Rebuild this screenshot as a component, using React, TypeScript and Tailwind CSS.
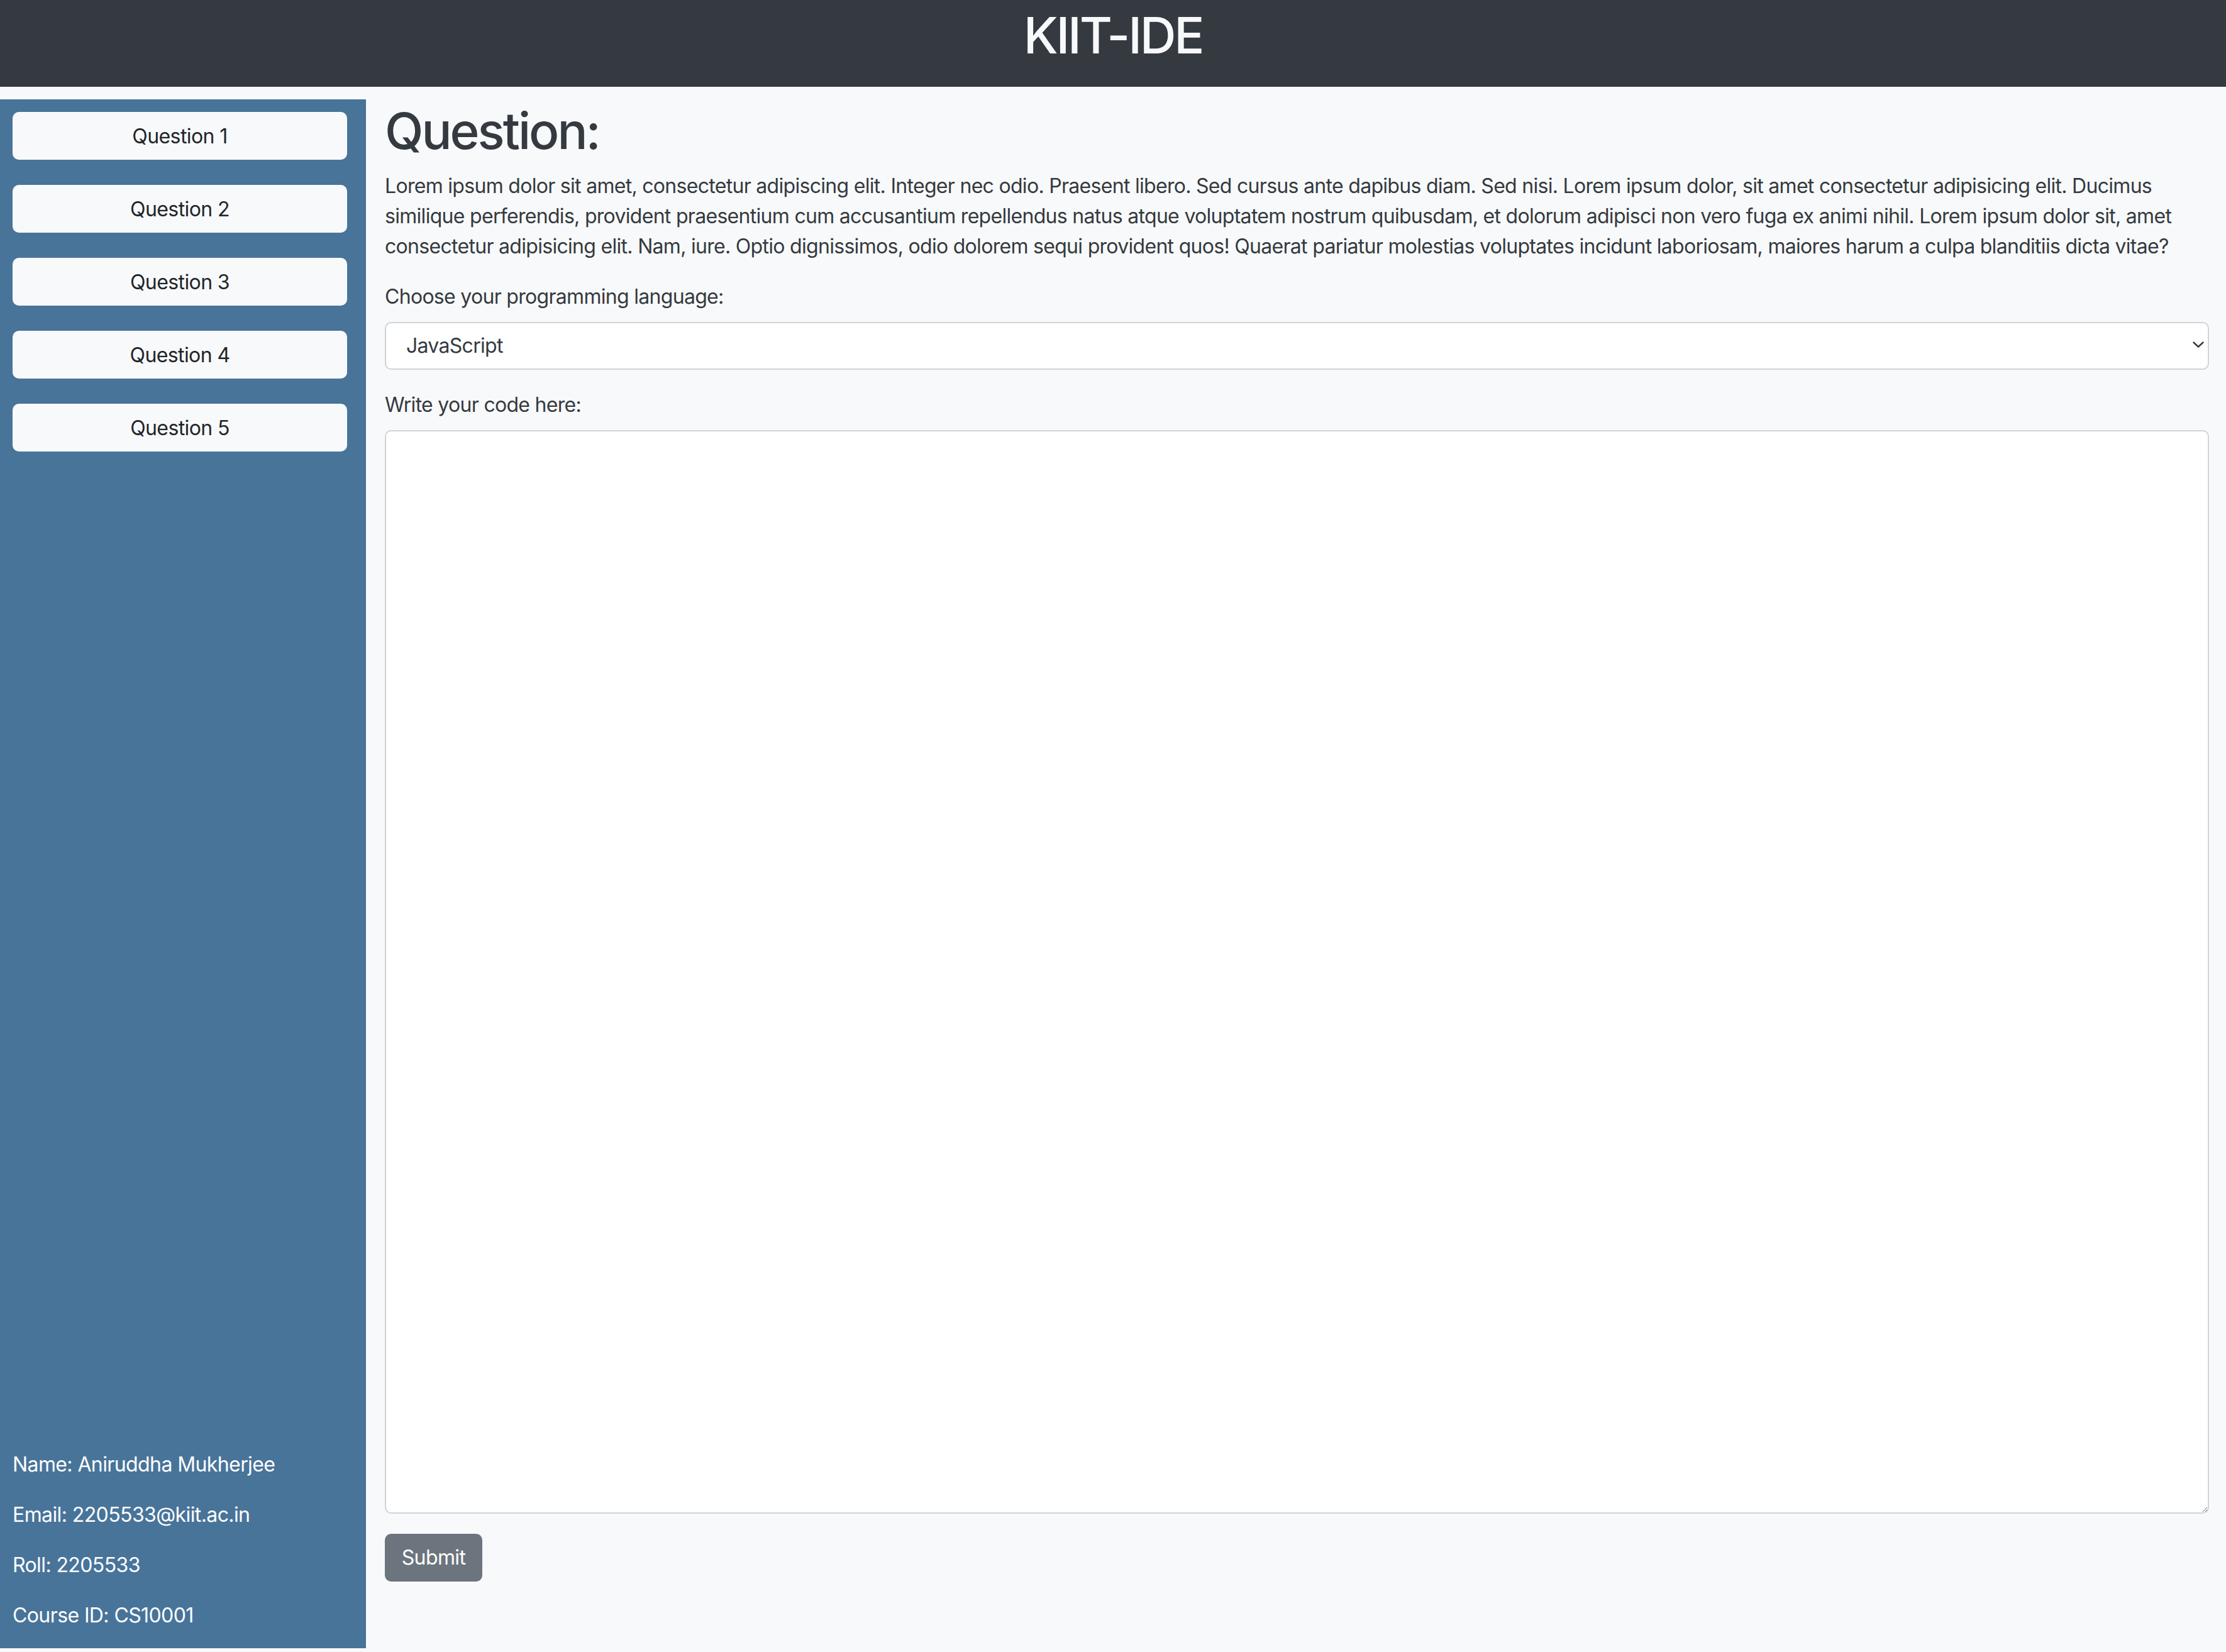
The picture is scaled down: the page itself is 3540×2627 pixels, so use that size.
import React from "react";

const questions = ["Question 1", "Question 2", "Question 3", "Question 4", "Question 5"];

export default function App() {
  return (
    <div className="w-[3540px] h-[2627px] bg-[#f8f9fa] flex flex-col font-['Inter','Noto_Sans',sans-serif] text-[#343a40] overflow-hidden">
      <header className="h-[138px] shrink-0 bg-[#343a40] flex justify-center">
        <h1 className="mt-[8px] text-[80px] leading-[96px] font-medium tracking-[-3.2px] text-[#f8f9fa]">KIIT-IDE</h1>
      </header>
      <div className="flex flex-1 pt-[20px] pb-[6px] min-h-0">
        <aside className="w-[582px] shrink-0 bg-[#48749a] pl-[20px] pr-[30px] py-[20px] flex flex-col justify-between">
          <div className="flex flex-col gap-[40px]">
            {questions.map((q) => (
              <button
                key={q}
                className="h-[76px] w-full rounded-[10px] bg-[#f8f9fa] pt-[2px] text-[32px] leading-[48px] text-[#212529] tracking-[-0.6px]"
              >
                {q}
              </button>
            ))}
          </div>
          <div className="flex flex-col gap-[32px] pb-[8px] text-white text-[32px] leading-[48px] tracking-[-0.6px]">
            <p>Name: Aniruddha Mukherjee</p>
            <p>Email: 2205533@kiit.ac.in</p>
            <p>Roll: 2205533</p>
            <p>Course ID: CS10001</p>
          </div>
        </aside>
        <main className="flex-1 pl-[30px] pr-[27px] pt-[2px] flex flex-col">
          <h1 className="text-[80px] leading-[96px] font-medium tracking-[-3px] mb-[16px]">Question:</h1>
          <p className="text-[32px] leading-[48px] tracking-[-0.7px] mb-[32px]">
            Lorem ipsum dolor sit amet, consectetur adipiscing elit. Integer nec odio. Praesent libero. Sed cursus ante dapibus diam. Sed nisi. Lorem ipsum dolor, sit amet consectetur adipisicing elit. Ducimus
            <br />
            similique perferendis, provident praesentium cum accusantium repellendus natus atque voluptatem nostrum quibusdam, et dolorum adipisci non vero fuga ex animi nihil. Lorem ipsum dolor sit, amet
            <br />
            consectetur adipisicing elit. Nam, iure. Optio dignissimos, odio dolorem sequi provident quos! Quaerat pariatur molestias voluptates incidunt laboriosam, maiores harum a culpa blanditiis dicta vitae?
          </p>
          <label className="text-[32px] leading-[48px] tracking-[-0.7px] mb-[16px]">Choose your programming language:</label>
          <div className="relative mb-[32px]">
            <select
              defaultValue="javascript"
              className="appearance-none w-full h-[76px] rounded-[10px] border-2 border-[#ced4da] bg-white pl-[32px] pr-[72px] text-[32px] leading-[48px] tracking-[-0.7px] text-[#343a40] outline-none"
            >
              <option value="javascript">JavaScript</option>
              <option value="python">Python</option>
              <option value="java">Java</option>
              <option value="cpp">C++</option>
            </select>
            <svg
              className="absolute right-[8px] top-[30px] pointer-events-none"
              width="18"
              height="12"
              viewBox="0 0 18 12"
              fill="none"
            >
              <path d="M1.5 2.5 L9 9.5 L16.5 2.5" stroke="#343a40" strokeWidth="2.4" strokeLinecap="round" strokeLinejoin="round" />
            </svg>
          </div>
          <label className="text-[32px] leading-[48px] tracking-[-0.7px] mb-[16px]">Write your code here:</label>
          <textarea className="w-full h-[1723px] shrink-0 rounded-[10px] border-2 border-[#ced4da] bg-white p-[24px] text-[32px] outline-none mb-[32px]" />
          <div>
            <button className="h-[76px] w-[155px] rounded-[10px] bg-[#6c757d] text-white text-[32px] leading-[48px] tracking-[-0.6px]">
              Submit
            </button>
          </div>
        </main>
      </div>
    </div>
  );
}
